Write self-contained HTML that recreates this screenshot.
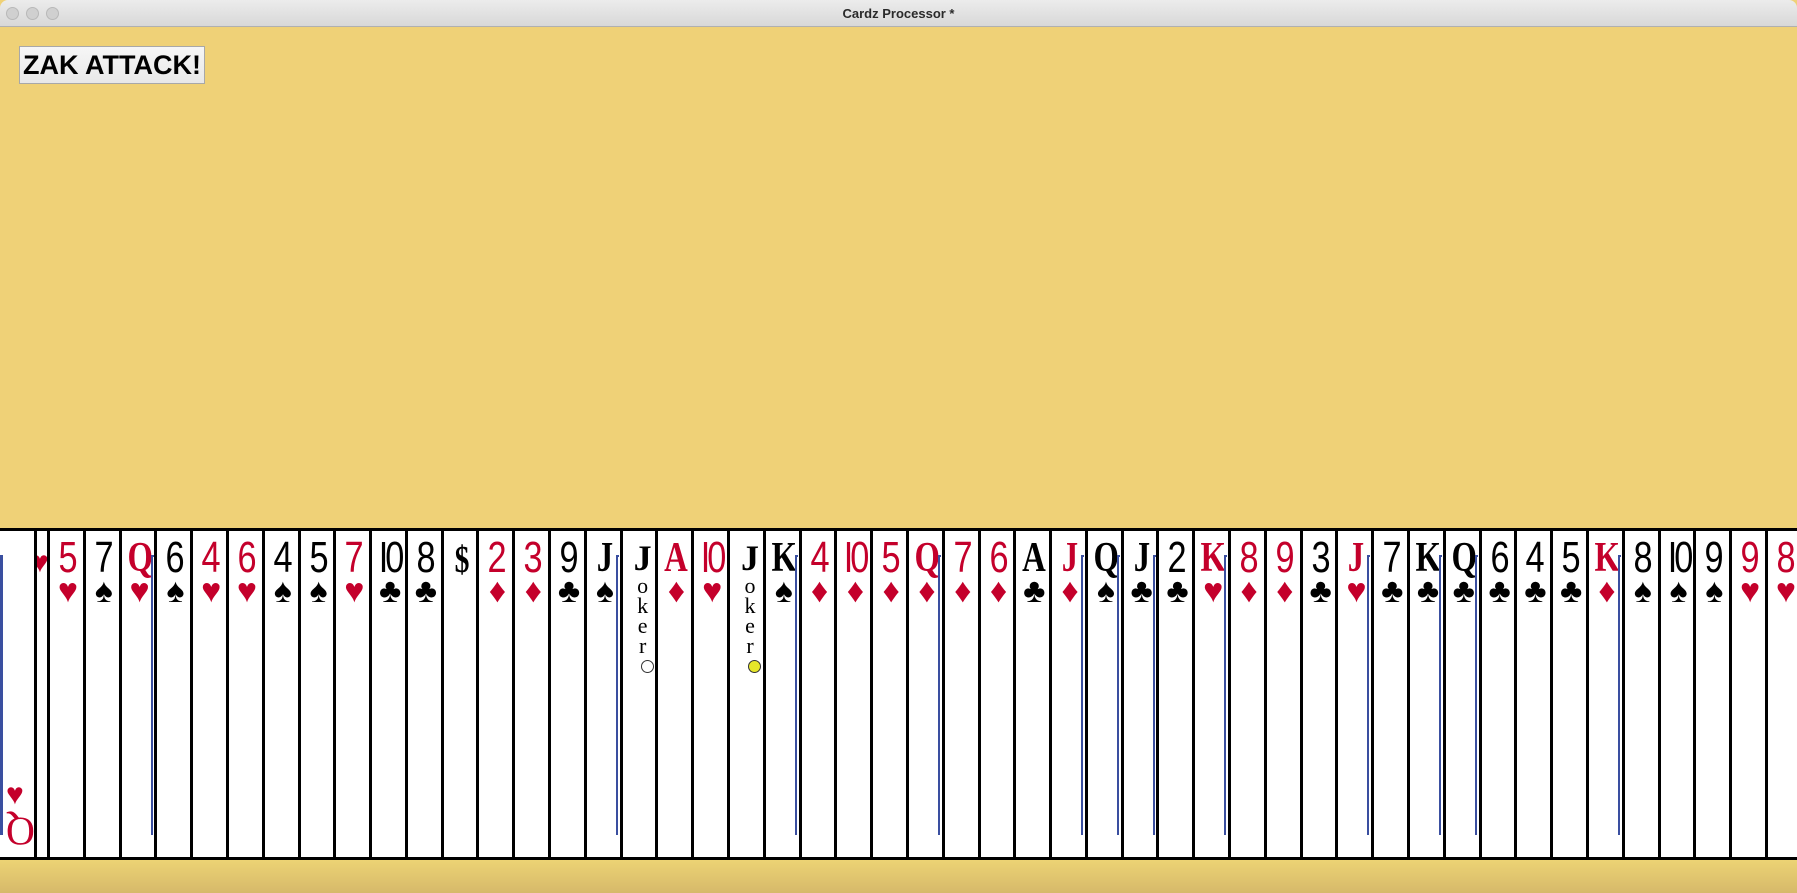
<!DOCTYPE html>
<html><head><meta charset="utf-8"><style>
*{margin:0;padding:0;box-sizing:border-box}
body{width:1797px;height:893px;overflow:hidden;background:#EFD177;position:relative;font-family:"Liberation Sans",sans-serif}
.tb{position:absolute;left:0;top:0;width:1797px;height:27px;background:linear-gradient(#ececec,#d8d8d8);border-bottom:1px solid #b0b0b0;border-radius:8px 8px 0 0}
.tb .t{position:absolute;left:0;right:0;top:6px;text-align:center;font-weight:bold;font-size:13px;color:#2a2a2a}
.dot{position:absolute;top:7px;width:13px;height:13px;border-radius:50%;background:#d0d0d0;border:1px solid #b8b8b8}
.btn{position:absolute;left:19px;top:46px;width:186px;height:38px;background:linear-gradient(#f6f6f6,#e8e8e8);border:1px solid #a8a8a8;font-weight:bold;font-size:27px;color:#000;line-height:36px;padding-left:3px;white-space:nowrap}
.strip{position:absolute;left:0;top:528px;width:1797px;height:332px;background:#fff;border-top:3px solid #000;border-bottom:3px solid #000}
.bot{position:absolute;left:0;top:860px;width:1797px;height:33px;background:linear-gradient(#ecd374,#d6b96a)}
.c{position:absolute;top:528px;height:332px;width:36px;border-left:3px solid #000}
.r{position:absolute;left:2px;top:8px;width:32px;text-align:center;font-size:44px;line-height:44px;transform:scaleX(0.78);transform-origin:center top}
.s{position:absolute;left:1px;top:46px;width:34px;text-align:center;font-size:34px;line-height:34px}
.red{color:#C4002B}.blk{color:#000}
.f{font-family:"Liberation Serif",serif;font-size:42px;font-weight:bold}
.fr{position:absolute;left:29px;top:27px;width:3px;height:280px;border-left:2px solid #3a4fa0;border-top:2px solid #3a4fa0}
.jk{position:absolute;left:10px;top:12px;width:20px;text-align:center;font-family:"Liberation Serif",serif;font-size:22px;line-height:20px;color:#000}
.jk b{font-size:36px;line-height:36px;display:block;font-weight:bold}
.ball{position:absolute;left:18px;top:132px;width:13px;height:13px;border-radius:50%;border:1.5px solid #333}
</style></head><body>
<div class="tb"><div class="dot" style="left:6px"></div><div class="dot" style="left:26px"></div><div class="dot" style="left:46px"></div><div class="t">Cardz Processor *</div></div>
<div class="btn">ZAK ATTACK!</div>
<div class="strip"></div>
<div class="bot"></div>
<div class="c" style="left:-3px;width:37px"><div style="position:absolute;left:0;top:27px;width:3px;height:280px;background:#3a4fa0"></div>
<div style="position:absolute;left:6px;top:250px;font-size:30px;color:#C4002B">♥</div>
<div style="position:absolute;left:6px;top:280px;font-size:40px;color:#C4002B;font-family:'Liberation Serif',serif;transform:rotate(180deg)">Q</div></div>
<div class="c" style="left:34px;width:13px;overflow:hidden"><div style="position:absolute;left:-6px;top:18px;font-size:30px;color:#C4002B">♥</div></div>

<div class="c" style="left:47.00px"><div class="r red">5</div><div class="s red">♥</div></div>
<div class="c" style="left:82.79px"><div class="r blk">7</div><div class="s blk">♠</div></div>
<div class="c" style="left:118.58px"><div class="r red f">Q</div><div class="s red">♥</div><div class="fr"></div></div>
<div class="c" style="left:154.37px"><div class="r blk">6</div><div class="s blk">♠</div></div>
<div class="c" style="left:190.16px"><div class="r red">4</div><div class="s red">♥</div></div>
<div class="c" style="left:225.95px"><div class="r red">6</div><div class="s red">♥</div></div>
<div class="c" style="left:261.74px"><div class="r blk">4</div><div class="s blk">♠</div></div>
<div class="c" style="left:297.53px"><div class="r blk">5</div><div class="s blk">♠</div></div>
<div class="c" style="left:333.32px"><div class="r red">7</div><div class="s red">♥</div></div>
<div class="c" style="left:369.11px"><div class="r blk" style="letter-spacing:-4px">I0</div><div class="s blk">♣</div></div>
<div class="c" style="left:404.90px"><div class="r blk">8</div><div class="s blk">♣</div></div>
<div class="c" style="left:440.69px"><div class="r blk f" style="font-size:38px;top:10px">$</div></div>
<div class="c" style="left:476.48px"><div class="r red">2</div><div class="s red">♦</div></div>
<div class="c" style="left:512.27px"><div class="r red">3</div><div class="s red">♦</div></div>
<div class="c" style="left:548.06px"><div class="r blk">9</div><div class="s blk">♣</div></div>
<div class="c" style="left:583.85px"><div class="r blk f">J</div><div class="s blk">♠</div><div class="fr"></div></div>
<div class="c" style="left:619.64px"><div class="jk"><b>J</b>o<br>k<br>e<br>r</div><div class="ball" style="background:#fff"></div></div>
<div class="c" style="left:655.43px"><div class="r red f">A</div><div class="s red">♦</div></div>
<div class="c" style="left:691.22px"><div class="r red" style="letter-spacing:-4px">I0</div><div class="s red">♥</div></div>
<div class="c" style="left:727.01px"><div class="jk"><b>J</b>o<br>k<br>e<br>r</div><div class="ball" style="background:#e6e62a"></div></div>
<div class="c" style="left:762.80px"><div class="r blk f">K</div><div class="s blk">♠</div><div class="fr"></div></div>
<div class="c" style="left:798.59px"><div class="r red">4</div><div class="s red">♦</div></div>
<div class="c" style="left:834.38px"><div class="r red" style="letter-spacing:-4px">I0</div><div class="s red">♦</div></div>
<div class="c" style="left:870.17px"><div class="r red">5</div><div class="s red">♦</div></div>
<div class="c" style="left:905.96px"><div class="r red f">Q</div><div class="s red">♦</div><div class="fr"></div></div>
<div class="c" style="left:941.75px"><div class="r red">7</div><div class="s red">♦</div></div>
<div class="c" style="left:977.54px"><div class="r red">6</div><div class="s red">♦</div></div>
<div class="c" style="left:1013.33px"><div class="r blk f">A</div><div class="s blk">♣</div></div>
<div class="c" style="left:1049.12px"><div class="r red f">J</div><div class="s red">♦</div><div class="fr"></div></div>
<div class="c" style="left:1084.91px"><div class="r blk f">Q</div><div class="s blk">♠</div><div class="fr"></div></div>
<div class="c" style="left:1120.70px"><div class="r blk f">J</div><div class="s blk">♣</div><div class="fr"></div></div>
<div class="c" style="left:1156.49px"><div class="r blk">2</div><div class="s blk">♣</div></div>
<div class="c" style="left:1192.28px"><div class="r red f">K</div><div class="s red">♥</div><div class="fr"></div></div>
<div class="c" style="left:1228.07px"><div class="r red">8</div><div class="s red">♦</div></div>
<div class="c" style="left:1263.86px"><div class="r red">9</div><div class="s red">♦</div></div>
<div class="c" style="left:1299.65px"><div class="r blk">3</div><div class="s blk">♣</div></div>
<div class="c" style="left:1335.44px"><div class="r red f">J</div><div class="s red">♥</div><div class="fr"></div></div>
<div class="c" style="left:1371.23px"><div class="r blk">7</div><div class="s blk">♣</div></div>
<div class="c" style="left:1407.02px"><div class="r blk f">K</div><div class="s blk">♣</div><div class="fr"></div></div>
<div class="c" style="left:1442.81px"><div class="r blk f">Q</div><div class="s blk">♣</div><div class="fr"></div></div>
<div class="c" style="left:1478.60px"><div class="r blk">6</div><div class="s blk">♣</div></div>
<div class="c" style="left:1514.39px"><div class="r blk">4</div><div class="s blk">♣</div></div>
<div class="c" style="left:1550.18px"><div class="r blk">5</div><div class="s blk">♣</div></div>
<div class="c" style="left:1585.97px"><div class="r red f">K</div><div class="s red">♦</div><div class="fr"></div></div>
<div class="c" style="left:1621.76px"><div class="r blk">8</div><div class="s blk">♠</div></div>
<div class="c" style="left:1657.55px"><div class="r blk" style="letter-spacing:-4px">I0</div><div class="s blk">♠</div></div>
<div class="c" style="left:1693.34px"><div class="r blk">9</div><div class="s blk">♠</div></div>
<div class="c" style="left:1729.13px"><div class="r red">9</div><div class="s red">♥</div></div>
<div class="c" style="left:1764.92px"><div class="r red">8</div><div class="s red">♥</div></div>
</body></html>
